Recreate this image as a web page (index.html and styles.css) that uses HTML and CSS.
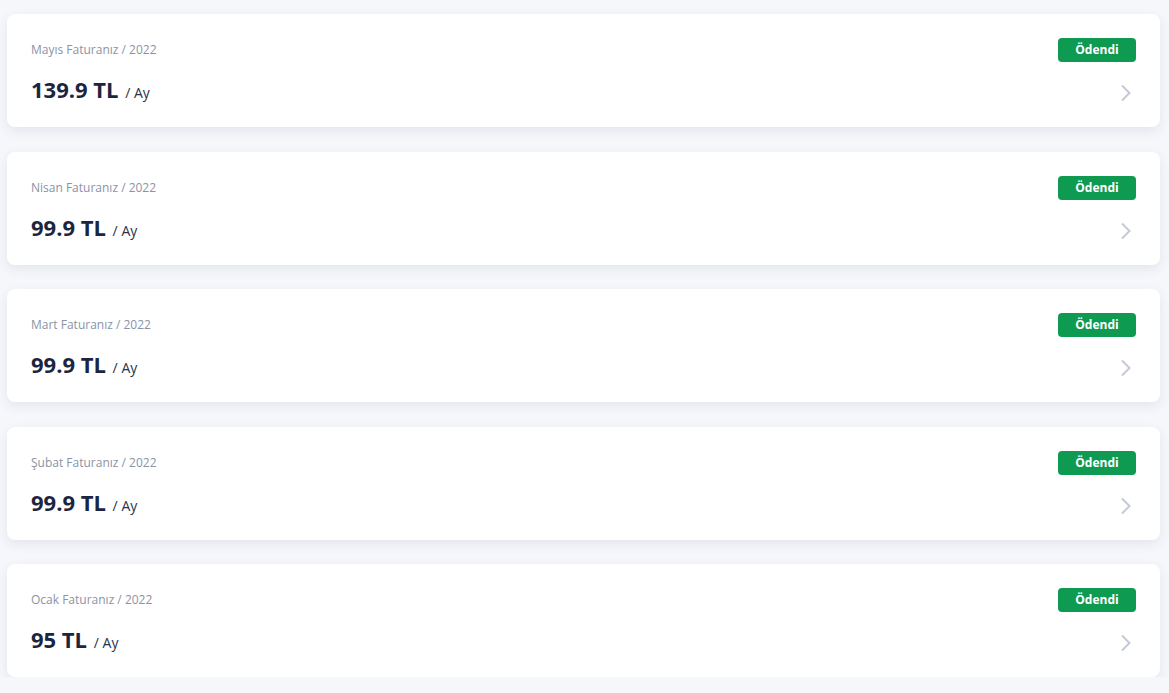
FILE: index.html
```html
<!DOCTYPE html>
<html lang="tr">
    <head>
        <title>Faturalarım</title>
        <meta charset="utf-8">
        <meta name="viewport" content="width=device-width, initial-scale=1.0">
        <link rel="stylesheet" href="styles.css">
    </head>

    <body>
        <div class="bills">
            <div class="bill">
                <div class="info">
                    <p class="label">Mayıs Faturanız / 2022</p>
                    <p class="price">139.9 TL <span>/ Ay</span></p>
                </div>
                <div class="side">
                    <span class="badge">Ödendi</span>
                    <svg class="chev" width="12" height="18" viewBox="0 0 12 18"><path d="M2 1.5 L9.5 9 L2 16.5" fill="none" stroke="#c4c9d6" stroke-width="2"/></svg>
                </div>
            </div>
            <div class="bill">
                <div class="info">
                    <p class="label">Nisan Faturanız / 2022</p>
                    <p class="price">99.9 TL <span>/ Ay</span></p>
                </div>
                <div class="side">
                    <span class="badge">Ödendi</span>
                    <svg class="chev" width="12" height="18" viewBox="0 0 12 18"><path d="M2 1.5 L9.5 9 L2 16.5" fill="none" stroke="#c4c9d6" stroke-width="2"/></svg>
                </div>
            </div>
            <div class="bill">
                <div class="info">
                    <p class="label">Mart Faturanız / 2022</p>
                    <p class="price">99.9 TL <span>/ Ay</span></p>
                </div>
                <div class="side">
                    <span class="badge">Ödendi</span>
                    <svg class="chev" width="12" height="18" viewBox="0 0 12 18"><path d="M2 1.5 L9.5 9 L2 16.5" fill="none" stroke="#c4c9d6" stroke-width="2"/></svg>
                </div>
            </div>
            <div class="bill">
                <div class="info">
                    <p class="label">Şubat Faturanız / 2022</p>
                    <p class="price">99.9 TL <span>/ Ay</span></p>
                </div>
                <div class="side">
                    <span class="badge">Ödendi</span>
                    <svg class="chev" width="12" height="18" viewBox="0 0 12 18"><path d="M2 1.5 L9.5 9 L2 16.5" fill="none" stroke="#c4c9d6" stroke-width="2"/></svg>
                </div>
            </div>
            <div class="bill">
                <div class="info">
                    <p class="label">Ocak Faturanız / 2022</p>
                    <p class="price">95 TL <span>/ Ay</span></p>
                </div>
                <div class="side">
                    <span class="badge">Ödendi</span>
                    <svg class="chev" width="12" height="18" viewBox="0 0 12 18"><path d="M2 1.5 L9.5 9 L2 16.5" fill="none" stroke="#c4c9d6" stroke-width="2"/></svg>
                </div>
            </div>
        </div>
    </body>
</html>
```

FILE: styles.css
```css
* {
    box-sizing: border-box;
    margin: 0;
    font-family: 'Open Sans', sans-serif;
}
body {
    background-color: #f6f7fb;
    padding: 14px 9px 0 7px;
}
.bills {
    display: flex;
    flex-direction: column;
    gap: 24.5px;
}
.bill {
    height: 113px;
    display: flex;
    justify-content: space-between;
    padding: 24px;
    background-color: #fff;
    border-radius: 8px;
    box-shadow: 0 4px 12px rgba(40, 55, 100, 0.09);
}
.info .label {
    margin-top: 1px;
    font-size: 12px;
    line-height: 22px;
    color: #8b93a5;
}
.info .price {
    margin-top: 13px;
    font-size: 22px;
    line-height: 30px;
    font-weight: 700;
    color: #1c2540;
}
.info .price span {
    font-size: 14px;
    font-weight: 400;
    color: #2b3348;
    margin-left: 1px;
}
.side {
    display: flex;
    flex-direction: column;
    align-items: flex-end;
}
.badge {
    width: 78px;
    height: 24px;
    line-height: 24px;
    text-align: center;
    font-size: 12px;
    font-weight: 700;
    color: #fff;
    background-color: #0f9a52;
    border-radius: 4px;
}
.chev {
    margin-top: 22px;
    margin-right: 4px;
}
```
